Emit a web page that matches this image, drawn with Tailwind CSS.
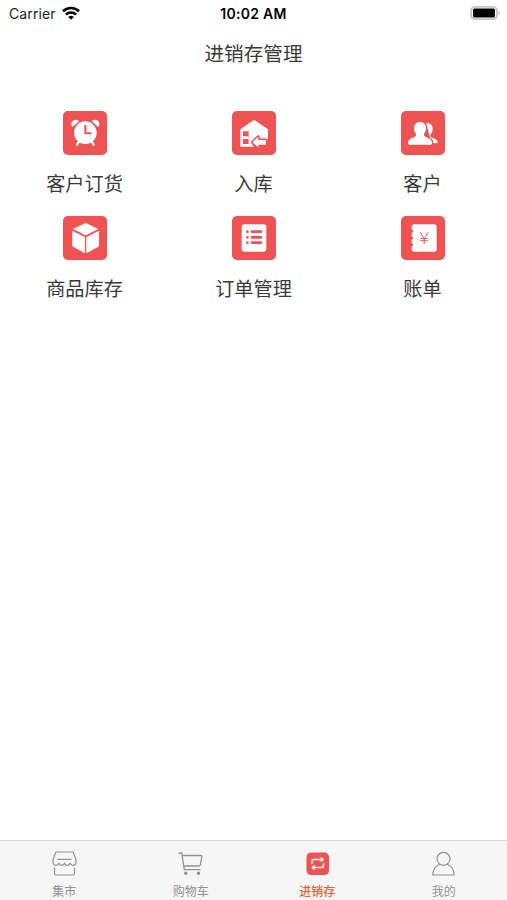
<!DOCTYPE html>
<html lang="zh-CN">
<head>
    <meta charset="UTF-8">
    <meta name="viewport" content="width=device-width, initial-scale=1.0">
    <title>进销存管理</title>
    <script src="https://cdn.jsdelivr.net/npm/@tailwindcss/browser@4"></script>
</head>
<body class="bg-white font-['Inter','Noto_Sans_CJK_SC',sans-serif] text-[#3a3a3a]">
    <div class="h-screen flex flex-col overflow-hidden">
        <!-- Status bar -->
        <div class="h-7 shrink-0 grid grid-cols-3 items-center px-[6px] text-black">
            <div class="flex items-center gap-[6px] pl-[3px]">
                <span class="text-[14px] leading-7 tracking-[0.1px] text-[#222]">Carrier</span>
                <svg class="w-[18px] h-[14px] -mt-[3px]" viewBox="0 0 18 14" fill="none" stroke="#000" stroke-width="2.6">
                    <path d="M1 5.2a11.6 11.6 0 0 1 16 0"/>
                    <path d="M3.9 8.6a7.4 7.4 0 0 1 10.2 0"/>
                    <path d="M9 13.8 6.2 11a4 4 0 0 1 5.6 0z" fill="#000" stroke="none"/>
                </svg>
            </div>
            <div class="text-center text-[14px] leading-7 font-semibold tracking-[0.3px] whitespace-nowrap">10:02 AM</div>
            <svg class="w-[31px] h-[14px] justify-self-end -mt-[2px]" viewBox="0 0 31 14">
                <rect x="1" y="0.9" width="26" height="12.2" rx="4" fill="#fff" stroke="#c4c4c4" stroke-width="1.8"/>
                <rect x="3" y="2.6" width="22" height="8.8" rx="1.5" fill="#000"/>
                <path d="M28.5 4.8a2.4 2.4 0 0 1 0 4.4z" fill="#c4c4c4"/>
            </svg>
        </div>

        <h1 class="h-[50px] shrink-0 text-center text-[19.6px] leading-[52px]">进销存管理</h1>

        <!-- Menu grid -->
        <main class="flex-1 pt-[33px]">
            <div class="grid grid-cols-3 gap-y-[18px] text-[19.2px] leading-7">
                <a class="flex flex-col items-center gap-[15px]">
                    <svg class="size-11 rounded-[5px] bg-[#ee5253]" viewBox="0 0 132 132">
                        <g fill="#fff">
                            <path d="M28 48a12 12 0 1 1 20-17zM106 48a12 12 0 1 0-20-17z"/>
                            <circle cx="67" cy="65" r="34"/>
                        </g>
                        <path d="M48 92l-6 9M86 92l6 9" stroke="#fff" stroke-width="7" stroke-linecap="round"/>
                        <path d="M67 43v24h18" fill="none" stroke="#ee5253" stroke-width="6"/>
                    </svg>
                    <span>客户订货</span>
                </a>
                <a class="flex flex-col items-center gap-[15px]">
                    <svg class="size-11 rounded-[5px] bg-[#ee5253]" viewBox="0 0 132 132">
                        <path d="M66 26 108 55v25H25V55z" fill="#fff"/>
                        <path d="M25 79h83v7H66l-8 10 8 11H25z" fill="#fff"/>
                        <path d="M33 61h17v15H33zM33 84h17v15H33z" fill="#ee5253"/>
                        <path d="M61 94 79 77v10h23v14H79v8z" fill="#fff" stroke="#ee5253" stroke-width="9" paint-order="stroke" stroke-linejoin="round"/>
                    </svg>
                    <span>入库</span>
                </a>
                <a class="flex flex-col items-center gap-[15px]">
                    <svg class="size-11 rounded-[5px] bg-[#ee5253]" viewBox="0 0 132 132" fill="#fff">
                        <path d="M75 36c13-1 20 7 20 18 0 8-3 13-7 17-1 5 2 7 7 9 10 4 15 8 15 14 0 2-1 3-3 3H92z"/>
                        <path d="M57 33c-12 0-18 8-18 19 0 8 3 13 6 17 1 5-2 8-7 10-11 4-17 8-17 16 0 4 2 6 5 6h62c3 0 5-2 5-6 0-8-6-12-17-16-5-2-8-5-7-10 3-4 6-9 6-17 0-11-6-19-18-19z" stroke="#ee5253" stroke-width="8" paint-order="stroke"/>
                    </svg>
                    <span>客户</span>
                </a>
                <a class="flex flex-col items-center gap-[15px]">
                    <svg class="size-11 rounded-[5px] bg-[#ee5253]" viewBox="0 0 132 132" fill="#fff" stroke="#fff" stroke-width="2" stroke-linejoin="round">
                        <path d="M68 22 104 39 68 57 32 39z"/>
                        <path d="M29 46 65 64V110L29 91z"/>
                        <path d="M107 46 71 64V110L107 91z"/>
                    </svg>
                    <span>商品库存</span>
                </a>
                <a class="flex flex-col items-center gap-[15px]">
                    <svg class="size-11 rounded-[5px] bg-[#ee5253]" viewBox="0 0 132 132">
                        <rect x="29" y="25" width="74" height="82" rx="8" fill="#fff"/>
                        <g fill="none" stroke="#ee5253" stroke-width="8" stroke-linecap="round">
                            <path d="M46 47h.1M60 47h27M46 64h.1M60 64h27M46 80h.1M60 80h27"/>
                        </g>
                    </svg>
                    <span>订单管理</span>
                </a>
                <a class="flex flex-col items-center gap-[15px]">
                    <svg class="size-11 rounded-[5px] bg-[#ee5253]" viewBox="0 0 132 132">
                        <rect x="32" y="25" width="75" height="82" rx="8" fill="#fff"/>
                        <g fill="#ee5253">
                            <circle cx="32" cy="46" r="4.500"/>
                            <circle cx="32" cy="66" r="4.500"/>
                            <circle cx="32" cy="86" r="4.500"/>
                        </g>
                        <text transform="translate(70 83) scale(1.15 1)" text-anchor="middle" font-size="49" font-weight="300" fill="#ee5253" font-family="Noto Sans CJK SC, sans-serif">¥</text>
                    </svg>
                    <span>账单</span>
                </a>
            </div>
        </main>

        <!-- Tab bar -->
        <nav class="h-[60px] shrink-0 grid grid-cols-4 border-t border-[#d9d9d9] bg-[#f6f6f6] pl-px text-[12px] leading-4 text-[#929292]">
            <a class="flex flex-col items-center pt-[10px] gap-[8px]">
                <svg class="size-[25px]" viewBox="0 0 25 25" fill="none" stroke="#929292" stroke-width="1.2" stroke-linejoin="round" stroke-linecap="round">
                    <path d="M5 1h15a1.600 1.600 0 0 1 1.500 1L24 8.500v2.500c0 2-1.300 3.300-3 3.300s-2.500-1-2.900-2.200c-.5 1.300-1.500 2.200-2.800 2.200s-2.300-.9-2.800-2.200c-.5 1.300-1.500 2.200-2.800 2.200s-2.300-.9-2.800-2.200c-.4 1.200-1.200 2.200-2.900 2.200s-3-1.300-3-3.300V8.500L3.500 2A1.600 1.600 0 0 1 5 1z"/>
                    <path d="M6 8.400h13M2.500 17v5.500a1.500 1.500 0 0 0 1.500 1.500h17a1.500 1.500 0 0 0 1.500-1.500V17"/>
                </svg>
                <span>集市</span>
            </a>
            <a class="flex flex-col items-center pt-[10px] gap-[8px]">
                <svg class="size-[25px]" viewBox="0 0 25 25" fill="none" stroke="#929292" stroke-width="1.3" stroke-linejoin="round" stroke-linecap="round">
                    <path d="M1 2h2.700l2.600 16.700h15.600M4.100 4.500h19c.6 0 .9.400.8 1l-1.600 8.500c-.1.700-.5 1-1.200 1H5.700"/>
                    <circle cx="7.800" cy="22.200" r="1.100" fill="#929292"/>
                    <circle cx="20.500" cy="22.200" r="1.100" fill="#929292"/>
                </svg>
                <span>购物车</span>
            </a>
            <a class="flex flex-col items-center pt-[10px] gap-[8px] font-medium text-[#e8602c]">
                <svg class="size-[25px]" viewBox="0 0 25 25">
                    <rect x="1.500" y="1.500" width="22.500" height="22.500" rx="4.500" fill="#ee5253"/>
                    <g fill="none" stroke="#fff" stroke-width="1.500" stroke-linecap="round" stroke-linejoin="round">
                        <path d="M7 12.500V10a1.500 1.500 0 0 1 1.500-1.500h9M16.300 6.800l1.900 1.700-1.900 1.700"/>
                        <path d="M18.500 12.500V15a1.500 1.500 0 0 1-1.500 1.500H8M9.200 14.800l-1.900 1.700 1.900 1.700"/>
                    </g>
                </svg>
                <span>进销存</span>
            </a>
            <a class="flex flex-col items-center pt-[10px] gap-[8px]">
                <svg class="size-[25px]" viewBox="0 0 25 25" fill="none" stroke="#929292" stroke-width="1.200" stroke-linejoin="round">
                    <circle cx="12.500" cy="7.800" r="6.500"/>
                    <path d="M8.700 13.200C4.700 14.800 2 18.500 1.700 24h21.500c-.3-5.500-3-9.200-7-10.800"/>
                </svg>
                <span>我的</span>
            </a>
        </nav>
    </div>
</body>
</html>
